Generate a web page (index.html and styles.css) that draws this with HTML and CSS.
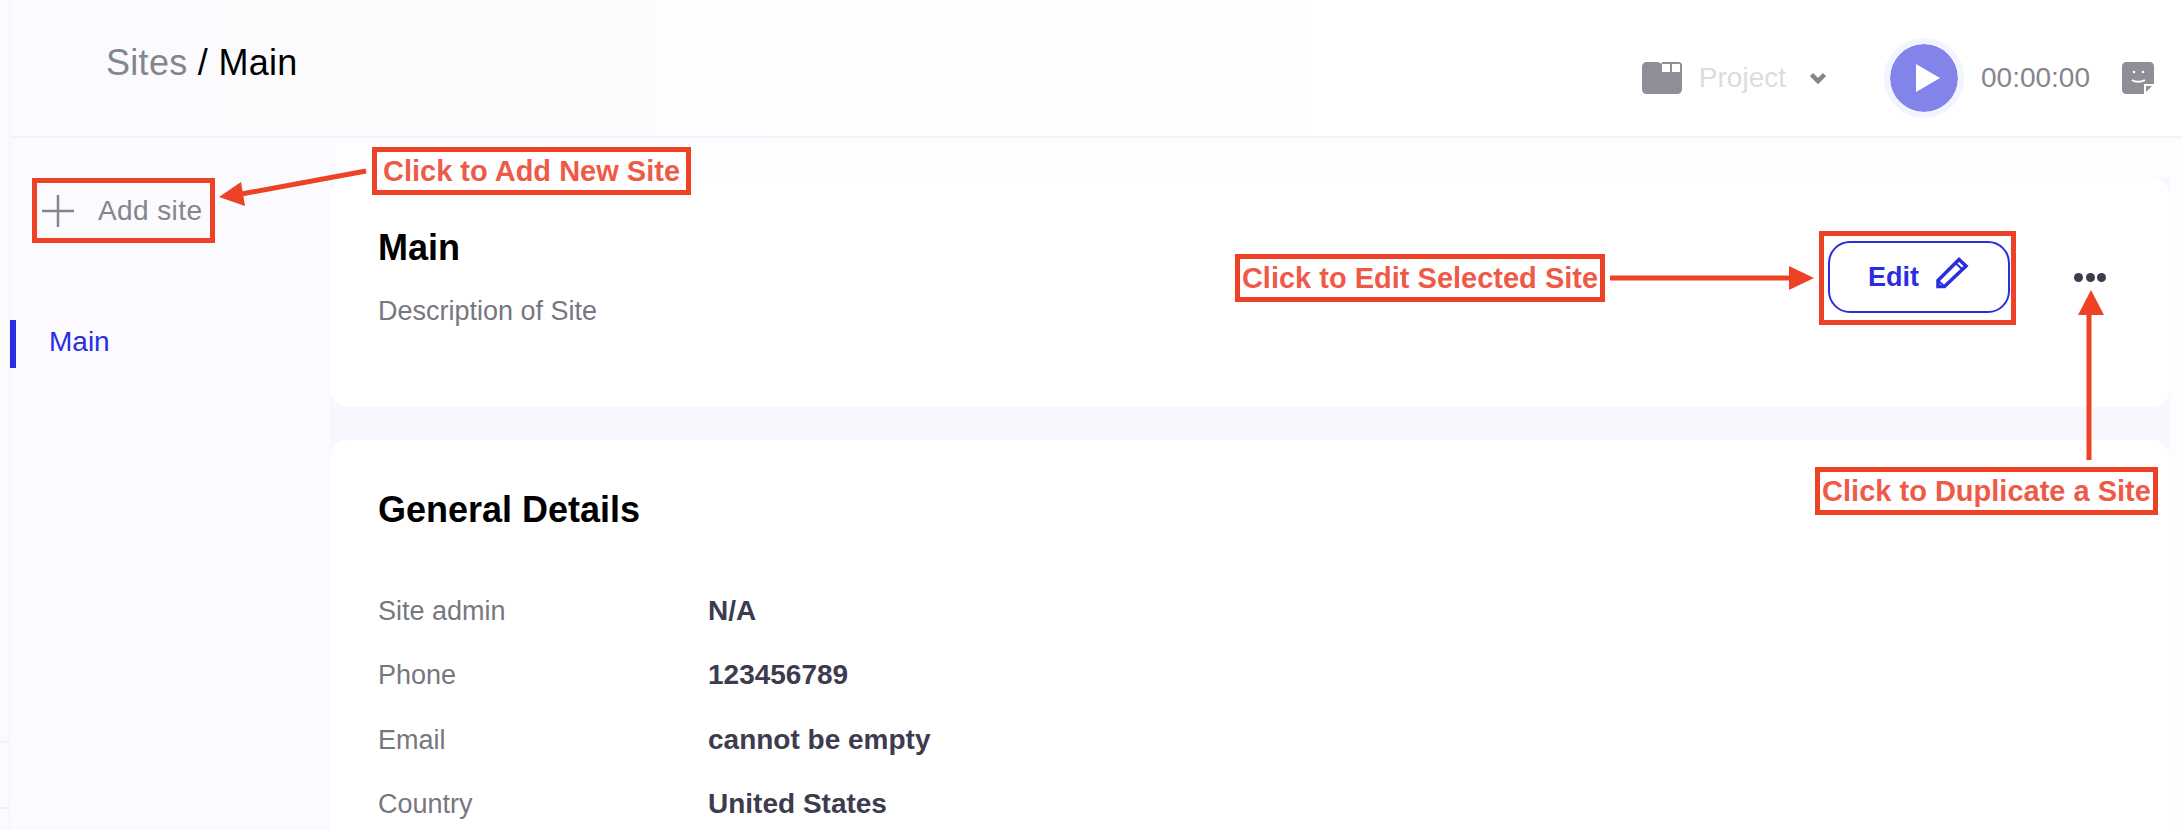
FILE: index.html
```html
<!DOCTYPE html>
<html lang="en">

<head>
    <meta charset="UTF-8">
    <meta name="viewport" content="width=device-width, initial-scale=1.0">
    <link rel="stylesheet" href="styles.css">
    <title>Sites</title>
</head>

<body>
    <div class="page">
        <div class="rail">
            <div class="rail-line"></div>
            <div class="rail-line"></div>
        </div>

        <div class="app">
            <!-- Top bar -->
            <header class="topbar">
                <div class="breadcrumb"><span class="crumb-parent">Sites</span> / Main</div>
                <div class="controls">
                    <svg class="folder-icon" width="40" height="32" viewBox="0 0 40 32">
                        <path d="M5 0h10c2 0 4 1 5 2V0h16c2 0 4 1 4 3v24c0 3-2 5-5 5H5c-3 0-5-2-5-5V5c0-3 2-5 5-5z" fill="#8e8e96"/>
                        <rect x="20" y="2" width="8" height="8" fill="#fff"/>
                        <rect x="30" y="2" width="8" height="8" fill="#fff"/>
                    </svg>
                    <span class="project">Project</span>
                    <svg class="chevron" width="16" height="13" viewBox="0 0 16 13">
                        <path d="M1.500 2.500L8 9l6.500-6.500" fill="none" stroke="#85858d" stroke-width="4.500"/>
                    </svg>
                    <div class="play-button">
                        <svg width="24" height="28" viewBox="0 0 24 28">
                            <path d="M0 0l24 14L0 28z" fill="#fff"/>
                        </svg>
                    </div>
                    <span class="timer">00:00:00</span>
                    <svg class="note-icon" width="32" height="32" viewBox="0 0 32 32">
                        <path d="M4 0h24c2 0 4 2 4 4v18L22 32H4c-2 0-4-2-4-4V4c0-2 2-4 4-4z" fill="#8e8e96"/>
                        <path d="M22 22h10v10H22z" fill="#fff"/>
                        <path d="M24 24h6l-6 6z" fill="#8e8e96"/>
                        <circle cx="12" cy="10" r="1.300" fill="#fff"/>
                        <circle cx="21" cy="10" r="1.300" fill="#fff"/>
                        <path d="M10 18c3 2.400 9 2.400 13 0" fill="none" stroke="#fff" stroke-width="2"/>
                    </svg>
                </div>
            </header>

            <div class="workspace">
                <!-- Site list -->
                <aside class="sidebar">
                    <div class="add-site">
                        <svg width="32" height="32" viewBox="0 0 32 32">
                            <path d="M16 0v32M0 16h32" stroke="#85858d" stroke-width="2.500"/>
                        </svg>
                        <span>Add site</span>
                    </div>
                    <div class="site-link">Main</div>
                </aside>

                <main class="content">
                    <div class="cards">
                        <section class="card site-card">
                            <div>
                                <h1 class="card-title">Main</h1>
                                <p class="description">Description of Site</p>
                            </div>
                            <div class="actions">
                                <button class="edit-button">
                                    Edit
                                    <svg class="pencil" width="36" height="36" viewBox="0 0 36 36">
                                        <path d="M4 25.500L25 4.500l7 6.500L10.500 31.500H4z" fill="none" stroke="#2a2de0" stroke-width="3.500"/>
                                        <path d="M21.500 8l7 6.500M4 25.500l6.500 6" fill="none" stroke="#2a2de0" stroke-width="2"/>
                                    </svg>
                                </button>
                                <div class="more-menu">
                                    <span></span>
                                    <span></span>
                                    <span></span>
                                </div>
                            </div>
                        </section>

                        <section class="card details-card">
                            <h2 class="card-title">General Details</h2>
                            <div class="details">
                                <div class="label">Site admin</div>
                                <div class="value">N/A</div>
                                <div class="label">Phone</div>
                                <div class="value">123456789</div>
                                <div class="label">Email</div>
                                <div class="value">cannot be empty</div>
                                <div class="label">Country</div>
                                <div class="value">United States</div>
                            </div>
                        </section>
                    </div>
                </main>
            </div>
        </div>

        <!-- Red annotations drawn over the screen -->
        <div class="mark mark-add"></div>
        <div class="mark mark-edit"></div>
        <div class="note note-add">Click to Add New Site</div>
        <div class="note note-edit">Click to Edit Selected Site</div>
        <div class="note note-duplicate">Click to Duplicate a Site</div>
        <svg class="arrows" width="2182" height="830" viewBox="0 0 2182 830">
            <path d="M366 171L236 195" stroke="#ee4226" stroke-width="5" fill="none"/>
            <path d="M219 197L241 182L245 206z" fill="#ee4226"/>
            <path d="M1610 278H1792" stroke="#ee4226" stroke-width="5" fill="none"/>
            <path d="M1814 278L1789 266V290z" fill="#ee4226"/>
            <path d="M2089 460V312" stroke="#ee4226" stroke-width="5" fill="none"/>
            <path d="M2091 290L2078 315H2104z" fill="#ee4226"/>
        </svg>
    </div>
</body>

</html>
```

FILE: styles.css
```css
body {
    margin: 0;
    background-color: #fff;
    font-family: "Liberation Sans", Arial, sans-serif;
}

.page {
    position: relative;
    display: flex;
    width: 2182px;
    height: 830px;
    overflow: hidden;
}

.rail {
    box-sizing: border-box;
    width: 10px;
    padding-top: 741px;
    background-color: #fbfbfe;
    border-right: 1px solid #f2f2f6;
}

.rail-line {
    height: 2px;
    margin-bottom: 64px;
    background-color: #f2f2f6;
}

.app {
    display: flex;
    flex-direction: column;
    flex: 1;
}

.topbar {
    box-sizing: border-box;
    display: flex;
    justify-content: space-between;
    align-items: flex-start;
    height: 138px;
    padding-right: 28px;
    background: linear-gradient(90deg, #fbfbff, #fff 60%);
    border-bottom: 2px solid #f3f3f7;
}

.breadcrumb {
    margin: 43px 0 0 96px;
    font-size: 36px;
    line-height: 40px;
    letter-spacing: 0.3px;
    color: #000;
}

.crumb-parent {
    color: #85858d;
}

.controls {
    display: flex;
    align-items: center;
    height: 80px;
    margin-top: 38px;
}

.project {
    margin-left: 17px;
    font-size: 28px;
    color: #dcdcdf;
}

.chevron {
    margin-left: 24px;
}

.play-button {
    display: flex;
    justify-content: center;
    align-items: center;
    box-sizing: border-box;
    width: 80px;
    height: 80px;
    margin-left: 58px;
    padding-left: 8px;
    background-color: #8284ea;
    background-clip: padding-box;
    border: 6px solid #f2f4ff;
    border-radius: 50%;
}

.timer {
    margin-left: 17px;
    font-size: 28px;
    color: #85858d;
}

.note-icon {
    margin-left: 32px;
}

.workspace {
    display: flex;
    flex: 1;
}

.sidebar {
    width: 320px;
    background-color: #fafaff;
}

.add-site {
    display: flex;
    align-items: center;
    gap: 24px;
    height: 32px;
    margin: 57px 0 0 32px;
    font-size: 28px;
    letter-spacing: 0.4px;
    color: #85858d;
}

.site-link {
    height: 48px;
    margin-top: 93px;
    padding-left: 33px;
    border-left: 6px solid #2a2de0;
    font-size: 28px;
    line-height: 44px;
    color: #2a2de0;
}

.content {
    flex: 1;
    padding-top: 40px;
    background-color: #fdfdff;
}

.cards {
    display: flex;
    flex-direction: column;
    gap: 33px;
    width: 1840px;
    height: 100%;
    background-color: #f7f7fd;
}

.card {
    box-sizing: border-box;
    padding: 50px 64px 0 48px;
    background-color: #fff;
    border-radius: 18px;
}

.site-card {
    display: flex;
    justify-content: space-between;
    height: 229px;
}

.details-card {
    flex: 1;
    border-radius: 18px 18px 0 0;
}

.card-title {
    margin: 0;
    font-size: 36px;
    line-height: 40px;
    font-weight: bold;
    color: #000;
}

.description {
    margin: 27px 0 0 0;
    font-size: 27px;
    line-height: 32px;
    color: #77777f;
}

.actions {
    display: flex;
    align-items: center;
    gap: 64px;
    height: 72px;
    margin-top: 13px;
}

.edit-button {
    display: flex;
    justify-content: center;
    align-items: center;
    gap: 15px;
    box-sizing: border-box;
    width: 182px;
    height: 72px;
    padding: 0;
    background-color: #fff;
    border: 2px solid #2a2de0;
    border-radius: 22px;
    font-family: inherit;
    font-size: 27px;
    font-weight: bold;
    color: #2a2de0;
}

.pencil {
    margin-bottom: 8px;
}

.more-menu {
    display: flex;
    gap: 2.500px;
}

.more-menu span {
    width: 9px;
    height: 9px;
    background-color: #3c3c4e;
    border-radius: 50%;
}

.details {
    display: grid;
    grid-template-columns: 330px 1fr;
    row-gap: 32.300px;
    margin-top: 65px;
    font-size: 27px;
    line-height: 32px;
}

.label {
    color: #77777f;
}

.value {
    font-size: 28px;
    font-weight: bold;
    color: #3c3c4e;
}

.mark,
.note {
    position: absolute;
    box-sizing: border-box;
    border: 5px solid #ee4226;
}

.mark-add {
    left: 32px;
    top: 178px;
    width: 183px;
    height: 65px;
}

.mark-edit {
    left: 1819px;
    top: 231px;
    width: 197px;
    height: 94px;
}

.note {
    display: flex;
    justify-content: center;
    align-items: center;
    height: 48px;
    background-color: #fff;
    font-size: 29px;
    font-weight: bold;
    color: #ef5a48;
    white-space: nowrap;
}

.note-add {
    left: 372px;
    top: 147px;
    width: 319px;
}

.note-edit {
    left: 1235px;
    top: 254px;
    width: 370px;
}

.note-duplicate {
    left: 1815px;
    top: 467px;
    width: 343px;
}

.arrows {
    position: absolute;
    left: 0;
    top: 0;
    pointer-events: none;
}
```
